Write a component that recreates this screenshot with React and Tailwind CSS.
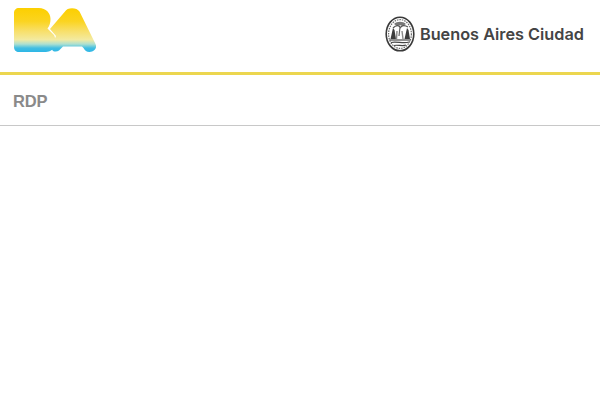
import React from 'react';

const BaLogo = () => (
  <svg width="83" height="44" viewBox="0 0 83 44" className="block">
    <defs>
      <linearGradient id="baFill" gradientUnits="userSpaceOnUse" x1="0" y1="0" x2="0" y2="44">
        <stop offset="0" stopColor="#fccf00" />
        <stop offset="0.3" stopColor="#fbd420" />
        <stop offset="0.52" stopColor="#f8df68" />
        <stop offset="0.72" stopColor="#f3eaa0" />
        <stop offset="0.82" stopColor="#aee0d0" />
        <stop offset="0.91" stopColor="#42bee2" />
        <stop offset="1" stopColor="#2db6e6" />
      </linearGradient>
    </defs>
    {/* B */}
    <path
      fill="url(#baFill)"
      d="M5 0 H25 C32 0 36.5 5 36.5 11 C36.5 15 35.5 18 33.5 20.5 L40 27 C42 31 42 37 39.5 40.5 C37 43.5 33 44 29 44 H5 C2 44 0 42 0 39 V5 C0 2 2 0 5 0 Z"
    />
    {/* A */}
    <path
      fill="url(#baFill)"
      d="M51 3.5 C53 -1 63 -1 65.5 3.5 L81.5 36 C83.5 40 80 44 75.5 44 C72.5 44 71 42.5 69.5 40 L68 38.5 H49 L45 42.5 C43.5 43.7 41 44 39 43 L37 40 L42 28 L36 21 Z"
    />
  </svg>
);

const CityShield = () => (
  <svg width="30" height="36" viewBox="0 0 30 36" className="block">
    <ellipse cx="15" cy="18" rx="13.8" ry="16.8" fill="#fff" stroke="#3a3a3a" strokeWidth="1.6" />
    <ellipse cx="15" cy="18" rx="11.4" ry="14.4" fill="none" stroke="#6a6a6a" strokeWidth="1.2" strokeDasharray="1.5 1" />
    {/* sun and branches */}
    <path d="M9 8 C12 5 18 5 21 8 L18 10 C16 9 14 9 12 10 Z" fill="#777" />
    <path d="M8 12 C11 9 14 9 15.5 11.5 C17 9 20 9 23 11" stroke="#555" strokeWidth="1.2" fill="none" />
    <path d="M15 11 L14 20" stroke="#666" strokeWidth="1.2" />
    {/* trees */}
    <path d="M8 12 L5.5 23 H11 L9.5 14 Z" fill="#3c3c3c" />
    <path d="M22 12 L19.5 23 H25 L23.5 14 Z" fill="#3c3c3c" />
    <path d="M12 15 L11.5 23 M17 15 L18 23" stroke="#8a8a8a" strokeWidth="1.4" />
    {/* water */}
    <path d="M4.5 24 H25.5" stroke="#555" strokeWidth="1.3" />
    <path d="M6 26.5 C11 25 19 28 24 26" stroke="#444" strokeWidth="1.2" fill="none" />
    <path d="M9 29.5 C12 28.5 18 30.5 21 29" stroke="#444" strokeWidth="1.2" fill="none" />
  </svg>
);

export default function App() {
  return (
    <div className="min-h-[400px] bg-white font-['Liberation_Sans',sans-serif]">
      <header className="h-[75px] border-b-[3px] border-[#ecd64f] flex items-start justify-between pl-[14px] pr-[16px] pt-[8px]">
        <BaLogo />
        <div className="flex items-center gap-[5px] mt-[8px] -ml-[1px]">
          <CityShield />
          <span className="font-['Inter',sans-serif] font-semibold text-[16.3px] leading-none text-[#444444]">
            Buenos Aires Ciudad
          </span>
        </div>
      </header>
      <div className="h-[51px] border-b border-[#c8c8c8] flex items-center pl-[13px] pt-[3px]">
        <h1 className="font-bold text-[16.5px] tracking-[-0.2px] text-[#8a8a8a]">RDP</h1>
      </div>
    </div>
  );
}
